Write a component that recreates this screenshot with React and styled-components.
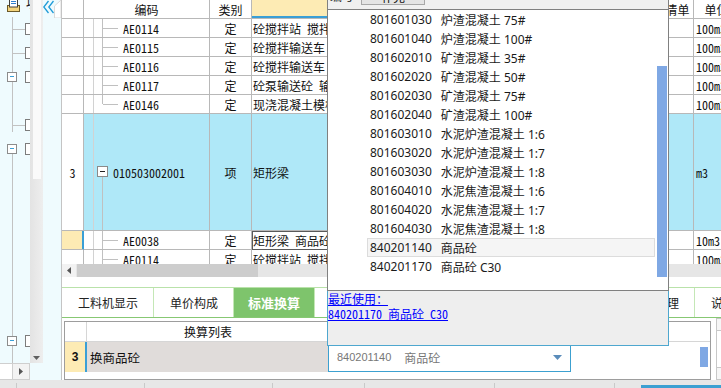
import React from 'react';
import styled, { createGlobalStyle } from 'styled-components';

const SONG = `"Noto Sans Mono CJK SC", "DejaVu Sans Mono", "Noto Sans CJK SC", monospace`;
const HEI = `"Noto Sans", "Noto Sans CJK SC", sans-serif`;
const CJK = `"Noto Sans CJK SC", sans-serif`;

const GlobalStyle = createGlobalStyle`
  html, body { margin: 0; padding: 0; background: #fff; }
  body { width: 721px; height: 388px; overflow: hidden; font-family: ${CJK}; }
  * { box-sizing: border-box; }
`;

const Frame = styled.div`
  width: 721px; height: 388px; display: flex; flex-direction: column; overflow: hidden;
`;
const Body = styled.div`display: flex; height: 380px; flex: none;`;

/* ---------- left panel ---------- */
const LeftPanel = styled.div`
  width: 62px; flex: none; display: flex; flex-direction: column;
  background: #effbfe; border-right: 1px solid #c4c4c4;
`;
const LeftUpper = styled.div`display: flex; height: 363px; flex: none;`;
const TreeCol = styled.div`
  width: 30px; flex: none; overflow: hidden; display: flex; flex-direction: column;
`;
const IconRow = styled.div`
  height: 17px; flex: none; display: flex; align-items: flex-start; padding-left: 7px;
  & > svg { flex: none; }
`;
const TreeTitle = styled.span`
  flex: none; margin-left: 6px; margin-top: -4px; font-size: 12px; line-height: 14px;
  white-space: nowrap; color: #111;
`;
const TreeRow = styled.div`
  position: relative; height: ${p => p.$h}px; flex: none; display: flex; align-items: center;
  &::before {
    content: ''; position: absolute; left: 12px; width: 1px; background: #c2c2c2;
    top: ${p => (p.$line === 'bottom' ? '50%' : '0')};
    bottom: ${p => (p.$line === 'top' ? 'calc(50% - 7px)' : '0')};
  }
`;
const Stub = styled.span`width: 13px; height: 1px; background: #c2c2c2; margin-left: 12px; flex: none;`;
const MinusBox = styled.span`
  position: relative; z-index: 1; width: 10px; height: 10px; margin-left: 7px; flex: none;
  border: 1px solid #8c8c8c; background: #fff;
  &::after { content: ''; position: absolute; left: 2px; right: 2px; top: 3px; height: 1px; background: #3a9fd6; }
`;
const NodeBox = styled.span`
  width: 12px; height: 12px; flex: none; border: 1px solid #7c7c7c; background: #fff;
  margin-left: ${p => p.$ml || 0}px;
`;
const VScroll = styled.div`
  width: 13px; flex: none; display: flex; flex-direction: column;
  background: linear-gradient(90deg, #e3e3e3, #eeeeee);
`;
const VThumb = styled.div`height: 179px; flex: none; margin: 0 2px 0 3px; background: #fafafa;`;
const VRest = styled.div`flex: 1;`;
const VArrow = styled.div`height: 10px; flex: none; display: flex; justify-content: center; align-items: center;`;
const Strip = styled.div`flex: 1; display: flex; align-items: flex-start; & > svg { flex: none; }`;
const LeftLower = styled.div`display: flex; height: 17px; flex: none;`;
const HBlank = styled.div`width: 13px; background: #fff; border: 1px solid #cfcfcf; border-left: none;`;
const HArrowBox = styled.div`
  width: 17px; background: #f3f3f3; border: 1px solid #cfcfcf; border-left: none;
  display: flex; align-items: center; justify-content: center;
`;

/* ---------- main ---------- */
const Main = styled.div`flex: 1; min-width: 0; position: relative; display: flex; flex-direction: column;`;
const Grid = styled.div`height: 264px; flex: none; overflow: hidden;`;
const GridRow = styled.div`
  display: grid; grid-template-columns: 22px 126px 42px 410px 32px 46px;
  height: ${p => p.$h}px; background: ${p => p.$bg || '#fff'};
`;
const Cell = styled.div`
  border-right: 1px solid ${p => (p.$sel ? '#5a5a5a' : '#b8b8b8')};
  border-bottom: 1px solid ${p => (p.$sel ? '#5a5a5a' : '#b8b8b8')};
  display: flex; align-items: center; overflow: hidden; white-space: nowrap;
  justify-content: ${p => (p.$center ? 'center' : 'flex-start')};
  padding-left: ${p => p.$pad || 0}px;
  font-family: ${p => (p.$cjk ? CJK : SONG)}; font-size: 12px; color: #111;
  background: ${p => p.$bg || 'transparent'};
  box-shadow: ${p => (p.$sel ? 'inset 1px 1px 0 #5a5a5a' : p.$mark ? 'inset -1px 0 0 #3a9fd6' : p.$head ? 'inset 0 -2px 0 #3a9fd6' : 'none')};
  ${p => p.$mark && 'border-right-color: #3a9fd6;'}
`;
const CodeCell = styled(Cell)`align-items: stretch;`;
const Indent = styled.span`width: 10px; flex: none; border-right: 1px solid #d2d2d2;`;
const Connector = styled.span`
  position: relative; flex: none; width: ${p => (p.$kind === 'root' ? 19 : 29)}px;
  display: flex; align-items: center;
  &::before {
    content: ''; position: absolute; left: 8px; width: 1px; background: #c0c0c0;
    top: ${p => (p.$kind === 'root' ? 'calc(50% + 5px)' : '0')};
    bottom: ${p => (p.$kind === 'last' ? '50%' : '0')};
  }
  &::after {
    content: ''; position: absolute; left: 9px; width: 15px; top: 50%; height: 1px; background: #c0c0c0;
    display: ${p => (p.$kind === 'root' ? 'none' : 'block')};
  }
`;
const TreeMinus = styled.span`
  position: relative; z-index: 1; margin-left: 3px; margin-top: -1px; width: 11px; height: 11px;
  border: 1px solid #8a8a8a; background: #fff;
  &::after { content: ''; position: absolute; left: 2px; right: 2px; top: 4px; height: 1px; background: #222; }
`;
const CodeText = styled.span`align-self: center; font-family: ${SONG}; font-size: 12px;`;

const HScroll = styled.div`height: 13px; flex: none; display: flex; background: #e6e6e6;`;
const HArrow = styled.div`width: 14px; background: #f2f2f2; display: flex; align-items: center; justify-content: center;`;
const HThumb = styled.div`width: 181px; margin-left: 1px; background: #cdcdcd;`;
const Gap = styled.div`height: 10px; flex: none; background: #fff;`;

const Tabs = styled.div`
  height: 31px; flex: none; display: flex; white-space: nowrap; overflow: hidden;
  border-top: 1px solid #b9e2aa; border-bottom: 1px solid #87c873; background: #fff;
`;
const Tab = styled.div`
  flex: none; display: flex; align-items: center;
  padding: ${p => (p.$active ? '0 14px' : '0 15px 0 16px')};
  border-right: 1px solid #c4e7b6;
  font-family: ${CJK}; font-size: ${p => (p.$active ? 13 : 12)}px;
  font-weight: ${p => (p.$active ? 700 : 400)};
  color: ${p => (p.$active ? '#fff' : '#222')};
  background: ${p => (p.$active ? '#7ec46c' : 'transparent')};
  ${p => p.$active && 'margin: -1px 0;'}
`;

const BottomPanel = styled.div`height: 62px; flex: none; display: flex; background: #fff;`;
const ListBox = styled.div`
  flex: 1; margin: 3px 0 0 2px; border: 1px solid #9d9d9d; display: flex; flex-direction: column;
`;
const ListHead = styled.div`height: 20px; flex: none; display: flex; border-bottom: 1px solid #d6d6d6;`;
const HeadNum = styled.div`width: 22px; border-right: 1px solid #d6d6d6;`;
const HeadName = styled.div`
  width: 242px; display: flex; align-items: center; justify-content: center;
  font-size: 12px; color: #111;
`;
const DataRow = styled.div`height: 30px; flex: none; display: flex;`;
const DNum = styled.div`
  width: 22px; background: #fdebb4; border-right: 2px solid #3a9fd6;
  display: flex; align-items: center; justify-content: center;
  font-family: "Liberation Sans", sans-serif; font-weight: 700; font-size: 12px; color: #111;
`;
const DName = styled.div`
  width: 241px; background: #e0dcda; display: flex; align-items: center; padding-left: 3px;
  font-size: 12.5px; color: #111;
`;
const SelectBox = styled.div`
  width: 243px; border: 1px solid #3ca0d0; background: #fff; display: flex; align-items: center;
  padding: 0 8px; color: #777;
`;
const SelCode = styled.span`font-family: "Liberation Sans", sans-serif; font-size: 11px;`;
const SelName = styled.span`margin-left: 13px; font-size: 12px; flex: 1;`;
const DFill = styled.div`flex: 1;`;
const DThumb = styled.div`width: 8px; height: 20px; align-self: center; margin-right: 2px; background: #7fa8e4;`;
const SideStrip = styled.div`width: 10px; flex: none; display: flex; flex-direction: column; padding-left: 5px;`;
const SideBox = styled.div`height: 13px; border: 1px solid #c8c8c8; border-right: none; background: #f6f6f6;`;
const SideGap = styled.div`flex: 1; border-left: 1px solid #c8c8c8;`;

/* ---------- popup ---------- */
const Popup = styled.div`
  position: absolute; left: 265px; top: -11px; width: 342px; z-index: 10;
  display: flex; flex-direction: column;
`;
const PopHead = styled.div`
  height: 21px; background: #f0f0f0; border: 1px solid #808080; border-top: none;
  display: flex; align-items: flex-start; padding-left: 2px;
`;
const PopLabel = styled.span`font-size: 12px; line-height: 14px; color: #111;`;
const PopButton = styled.span`
  margin-left: 7px; width: 64px; height: 16px; border: 1px solid #a8a8a8; background: #e4e4e4;
  font-size: 12px; line-height: 14px; text-align: center; color: #111;
`;
const PopList = styled.div`
  height: 281px; display: flex; background: #fff;
  border: 1px solid #808080; border-top: none;
`;
const Items = styled.div`flex: 1; padding: 0 2px 0 39px; display: flex; flex-direction: column;`;
const Item = styled.div`
  height: 19px; flex: none; display: flex; align-items: center; white-space: nowrap;
  padding-left: ${p => (p.$active ? 2 : 3)}px;
  font-family: ${HEI}; font-size: 12px; color: #1a1a1a;
  background: ${p => (p.$active ? '#f5f5f5' : 'transparent')};
  border: ${p => (p.$active ? '1px solid #dcdcdc' : 'none')};
`;
const ItemName = styled.span`margin-left: 9px;`;
const Track = styled.div`width: 10px; margin-right: 1px; display: flex; flex-direction: column;`;
const Thumb = styled.div`margin-top: 56px; height: 211px; background: #7fa8e4;`;
const PopFoot = styled.div`
  height: 55px; background: #eeeeee; border: 1px solid #4ea7cf; border-top: none;
  display: flex; flex-direction: column; align-items: flex-start;
`;
const Link = styled.a`
  font-family: ${SONG}; font-size: 12px; line-height: 15px; color: #0000ff;
  text-decoration: underline; white-space: pre;
`;

/* ---------- status ---------- */
const StatusBar = styled.div`
  height: 8px; flex: none; background: #e7e7e7; display: flex; align-items: flex-end;
`;
const StatusSeg = styled.div`
  width: ${p => p.$w}px; height: 5px; flex: none; border-right: 1px solid #c9c9c9;
`;
const StatusBlue = styled.div`margin-left: auto; width: 80px; height: 3px; background: #3ca0d2;`;

const gridRows = [
  { code: 'AE0114', name: '砼搅拌站 搅拌站生产能力 25m3/h', unit: '100m3', kind: 'mid' },
  { code: 'AE0115', name: '砼搅拌输送车 运距5km以内', unit: '100m3', kind: 'mid' },
  { code: 'AE0116', name: '砼搅拌输送车 每增加1km', unit: '100m3', kind: 'mid' },
  { code: 'AE0117', name: '砼泵输送砼 输送泵车', unit: '100m3', kind: 'mid' },
  { code: 'AE0146', name: '现浇混凝土模板 矩形梁', unit: '100m2', kind: 'last' },
];

const items = [
  ['801601030', '炉渣混凝土 75#'],
  ['801601040', '炉渣混凝土 100#'],
  ['801602010', '矿渣混凝土 35#'],
  ['801602020', '矿渣混凝土 50#'],
  ['801602030', '矿渣混凝土 75#'],
  ['801602040', '矿渣混凝土 100#'],
  ['801603010', '水泥炉渣混凝土 1:6'],
  ['801603020', '水泥炉渣混凝土 1:7'],
  ['801603030', '水泥炉渣混凝土 1:8'],
  ['801604010', '水泥焦渣混凝土 1:6'],
  ['801604020', '水泥焦渣混凝土 1:7'],
  ['801604030', '水泥焦渣混凝土 1:8'],
  ['840201140', '商品砼'],
  ['840201170', '商品砼 C30'],
];

const tabs = ['工料机显示', '单价构成', '标准换算', '换算信息', '特征及内容', '工程量明细', '反查工程量处理', '说明信息', '组价方案'];

const treeRows = [
  { h: 24, line: 'full', node: 'branch' },
  { h: 24, line: 'full', node: 'branch' },
  { h: 24, line: 'full', node: 'minus' },
  { h: 24, line: 'full', node: 'none' },
  { h: 24, line: 'top', node: 'branch' },
  { h: 24, line: 'bottom', node: 'minus' },
  { h: 168, line: 'full', node: 'none' },
  { h: 24, line: 'full', node: 'minus' },
  { h: 10, line: 'full', node: 'none' },
];

function DocIcon() {
  return (
    <svg width="13" height="12" viewBox="0 0 13 12">
      <rect x="0.5" y="5.5" width="12" height="6" fill="#f4d47c" stroke="#6b5a2a" />
      <rect x="2.5" y="-2" width="8" height="9" fill="#fff" stroke="#404040" />
      <line x1="4" y1="1.5" x2="9" y2="1.5" stroke="#2f7fd0" />
      <line x1="4" y1="3.5" x2="9" y2="3.5" stroke="#2f7fd0" />
    </svg>
  );
}

function RowBlock({ r, sel }) {
  return (
    <GridRow $h={19}>
      <Cell $bg={sel ? '#fdebb4' : undefined} $mark={sel} />
      <CodeCell>
        <Indent />
        <Connector $kind={r.kind} />
        <CodeText>{r.code}</CodeText>
      </CodeCell>
      <Cell $center $cjk>定</Cell>
      <Cell $pad={1} $sel={sel}>{r.name}</Cell>
      <Cell />
      <Cell $pad={2}>{r.unit}</Cell>
    </GridRow>
  );
}

export default function App() {
  return (
    <>
      <GlobalStyle />
      <Frame>
        <Body>
          <LeftPanel>
            <LeftUpper>
              <TreeCol>
                <IconRow>
                  <DocIcon />
                  <TreeTitle>项目结构</TreeTitle>
                </IconRow>
                {treeRows.map((t, i) => (
                  <TreeRow key={i} $h={t.h} $line={t.line}>
                    {t.node === 'branch' && (<><Stub /><NodeBox /></>)}
                    {t.node === 'minus' && (<><MinusBox /><NodeBox $ml={8} /></>)}
                  </TreeRow>
                ))}
              </TreeCol>
              <VScroll>
                <VThumb />
                <VRest />
                <VArrow>
                  <svg width="7" height="4" viewBox="0 0 7 4"><path d="M0 0H7L3.5 4Z" fill="#5f5f5f" /></svg>
                </VArrow>
              </VScroll>
              <Strip>
                <svg width="11" height="14" viewBox="0 0 11 14">
                  <polyline points="5.5,1 0.8,7 5.5,13" fill="none" stroke="#1f9bd7" strokeWidth="1.3" />
                  <polyline points="10.5,1 5.8,7 10.5,13" fill="none" stroke="#1f9bd7" strokeWidth="1.3" />
                </svg>
                <svg width="7" height="18" viewBox="0 0 7 18">
                  <polygon points="7,0 0.5,6 0.5,18 7,18" fill="#ffffff" stroke="#dadada" />
                </svg>
              </Strip>
            </LeftUpper>
            <LeftLower>
              <HBlank />
              <HArrowBox>
                <svg width="4" height="7" viewBox="0 0 4 7"><path d="M0 0L4 3.5L0 7Z" fill="#555" /></svg>
              </HArrowBox>
            </LeftLower>
          </LeftPanel>

          <Main>
            <Grid>
              <GridRow $h={19}>
                <Cell />
                <Cell $center $cjk>编码</Cell>
                <Cell $center $cjk>类别</Cell>
                <Cell $center $cjk $bg="#fdebb4" $head>名称</Cell>
                <Cell $center $cjk>清单</Cell>
                <Cell $center $cjk>单位</Cell>
              </GridRow>
              {gridRows.map(r => <RowBlock key={r.code} r={r} />)}
              <GridRow $h={117} $bg="#afe8f8">
                <Cell $center $bg="#fff">3</Cell>
                <CodeCell>
                  <Indent />
                  <Connector $kind="root"><TreeMinus /></Connector>
                  <CodeText>010503002001</CodeText>
                </CodeCell>
                <Cell $center $cjk>项</Cell>
                <Cell $pad={1}>矩形梁</Cell>
                <Cell />
                <Cell $pad={2}>m3</Cell>
              </GridRow>
              <RowBlock sel r={{ code: 'AE0038', name: '矩形梁 商品砼 C30', unit: '10m3', kind: 'mid' }} />
              <RowBlock r={{ code: 'AE0114', name: '砼搅拌站 搅拌站生产能力 25m3/h', unit: '100m3', kind: 'mid' }} />
            </Grid>
            <HScroll>
              <HArrow>
                <svg width="4" height="7" viewBox="0 0 4 7"><path d="M4 0L0 3.5L4 7Z" fill="#555" /></svg>
              </HArrow>
              <HThumb />
            </HScroll>
            <Gap />
            <Tabs>
              {tabs.map(t => <Tab key={t} $active={t === '标准换算'}>{t}</Tab>)}
            </Tabs>
            <BottomPanel>
              <ListBox>
                <ListHead>
                  <HeadNum />
                  <HeadName>换算列表</HeadName>
                </ListHead>
                <DataRow>
                  <DNum>3</DNum>
                  <DName>换商品砼</DName>
                  <SelectBox>
                    <SelCode>840201140</SelCode>
                    <SelName>商品砼</SelName>
                    <svg width="9" height="5" viewBox="0 0 9 5"><path d="M0 0H9L4.5 5Z" fill="#5a8cba" /></svg>
                  </SelectBox>
                  <DFill />
                  <DThumb />
                </DataRow>
              </ListBox>
              <SideStrip>
                <SideBox />
                <SideGap />
                <SideBox />
              </SideStrip>
            </BottomPanel>

            <Popup>
              <PopHead>
                <PopLabel>编号</PopLabel>
                <PopButton>补充</PopButton>
              </PopHead>
              <PopList>
                <Items>
                  {items.map(([c, n]) => (
                    <Item key={c} $active={c === '840201140'}>
                      <span>{c}</span>
                      <ItemName>{n}</ItemName>
                    </Item>
                  ))}
                </Items>
                <Track><Thumb /></Track>
              </PopList>
              <PopFoot>
                <Link>最近使用：</Link>
                <Link>840201170 商品砼 C30</Link>
              </PopFoot>
            </Popup>
          </Main>
        </Body>
        <StatusBar>
          <StatusSeg $w={17} />
          <StatusSeg $w={128} />
          <StatusSeg $w={128} />
          <StatusSeg $w={92} />
          <StatusSeg $w={130} />
          <StatusSeg $w={120} />
          <StatusBlue />
        </StatusBar>
      </Frame>
    </>
  );
}
